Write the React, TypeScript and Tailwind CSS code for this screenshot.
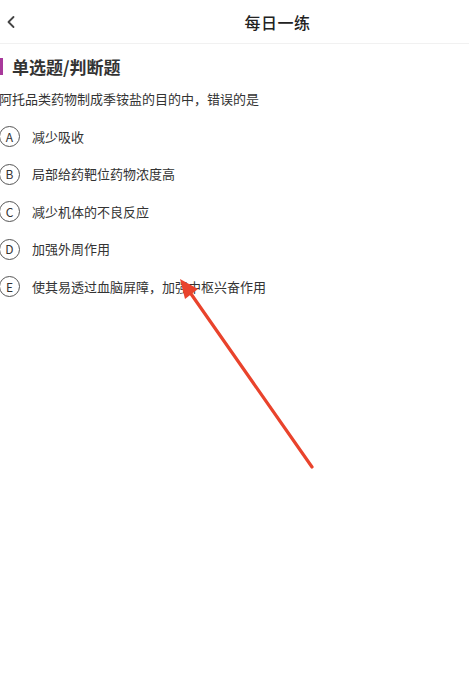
// DailyPractice -- 每日一练 single question view, with a red annotation arrow on top.

import { ChevronLeft } from 'lucide-react';

const FONT = { fontFamily: '"Noto Sans CJK SC", "Liberation Sans", sans-serif' };

const OPTIONS = [
  { key: 'A', text: '减少吸收' },
  { key: 'B', text: '局部给药靶位药物浓度高' },
  { key: 'C', text: '减少机体的不良反应' },
  { key: 'D', text: '加强外周作用' },
  { key: 'E', text: '使其易透过血脑屏障，加强中枢兴奋作用' },
];

export default function App() {
  return (
    <div className="relative w-[469px] h-[699px] bg-white overflow-hidden text-[#333]" style={FONT}>
      {/* -- Header -- */}
      <header className="relative flex items-center justify-center h-[44px] pl-[86px] border-b border-[#f1f1f1]">
        <ChevronLeft className="absolute left-[1px] top-[12px] w-[20px] h-[20px] text-[#444]" strokeWidth={2.2} />
        <h1 className="text-[16px] font-medium text-[#222] tracking-[0.5px]">每日一练</h1>
      </header>

      {/* -- Question -- */}
      <section className="flex flex-col">
        <div className="flex items-center gap-[9px] mt-[13px] h-[18px]">
          <span className="w-[3px] h-[17px] bg-[#a8399b]" />
          <h2 className="text-[17px] font-bold text-[#333] leading-none">单选题/判断题</h2>
        </div>

        <p className="mt-[14px] text-[13px] leading-[20px] text-[#333] -ml-[1px]">
          阿托品类药物制成季铵盐的目的中，错误的是
        </p>

        <ul className="flex flex-col mt-[17px] gap-[16.5px]">
          {OPTIONS.map((o) => (
            <li key={o.key} className="flex items-center h-[21px]">
              <span className="flex items-center justify-center w-[21px] h-[21px] -ml-[1px] rounded-full border border-[#555] text-[12px] text-[#333] leading-none">
                {o.key}
              </span>
              <span className="ml-[12px] text-[13px] text-[#333]">{o.text}</span>
            </li>
          ))}
        </ul>
      </section>

      {/* -- Annotation arrow -- */}
      <svg className="absolute left-0 top-0 pointer-events-none" width="469" height="699" viewBox="0 0 469 699">
        <line x1="312" y1="467" x2="189" y2="291" stroke="#e9432c" strokeWidth="3.2" strokeLinecap="round" />
        <polygon points="180,279 185,299 198,289" fill="#e9432c" />
      </svg>
    </div>
  );
}
